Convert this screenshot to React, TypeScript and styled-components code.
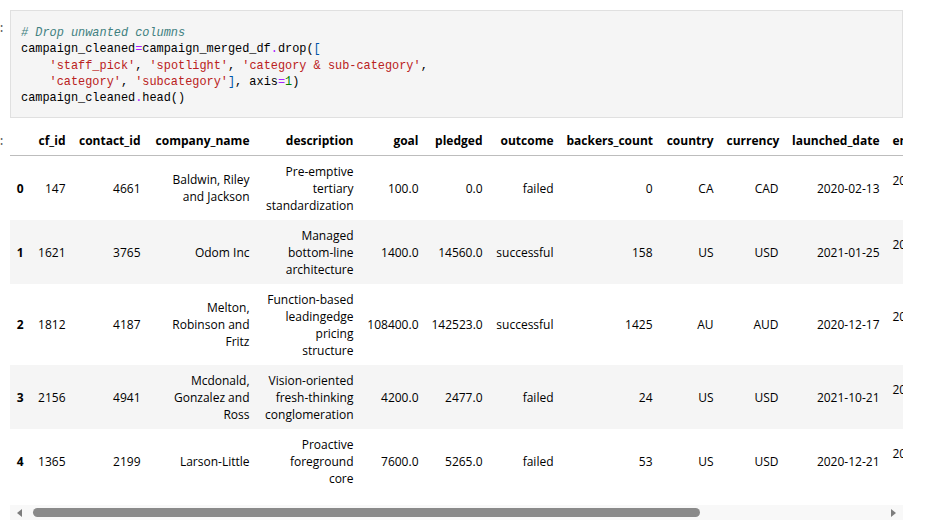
import React from "react";
import styled, { createGlobalStyle } from "styled-components";

const GlobalStyle = createGlobalStyle`
  html, body { margin: 0; padding: 0; background: #ffffff; }
  body { width: 927px; height: 523px; overflow: hidden; }
`;

const Page = styled.div`
  display: flex;
  flex-direction: column;
  gap: 7px;
  padding-top: 10px;
`;

const CellRow = styled.div`
  display: flex;
  align-items: flex-start;
`;

const Prompt = styled.div<{ $top: number }>`
  width: 10px;
  flex: none;
  padding-top: ${(p) => p.$top}px;
  font-family: "Liberation Mono", monospace;
  font-size: 12px;
  line-height: 12px;
  color: #616161;
  text-indent: -2px;
`;

const CodeBox = styled.pre`
  margin: 0;
  width: 893px;
  box-sizing: border-box;
  background: #f5f5f5;
  border: 1px solid #e0e0e0;
  padding: 14px 10px 11px;
  font-family: "Liberation Mono", "DejaVu Sans Mono", monospace;
  font-size: 11.9px;
  line-height: 16.3px;
  color: #000000;
`;

const Comment = styled.span`
  color: #408080;
  font-style: italic;
`;
const Str = styled.span`
  color: #ba2121;
`;
const Op = styled.span`
  color: #aa22ff;
`;
const Num = styled.span`
  color: #008000;
`;
const Br = styled.span`
  color: #0055aa;
`;

const Output = styled.div`
  width: 893px;
  display: flex;
  flex-direction: column;
`;

const Scroller = styled.div`
  width: 893px;
  overflow: hidden;
`;

const Table = styled.table`
  border-collapse: collapse;
  border-spacing: 0;
  table-layout: fixed;
  font-family: "Open Sans", "Noto Sans", sans-serif;
  font-size: 12px;
  line-height: 17px;
  color: #000000;
`;

const HeadCell = styled.th<{ $left?: boolean }>`
  padding: 6.5px;
  text-align: ${(p) => (p.$left ? "left" : "right")};
  vertical-align: middle;
  font-weight: 700;
  white-space: nowrap;
  border-bottom: 1px solid #bdbdbd;
`;

const Row = styled.tr<{ $stripe: boolean }>`
  background: ${(p) => (p.$stripe ? "#f5f5f5" : "#ffffff")};
`;

const IndexCell = styled.th`
  padding: 6.5px;
  text-align: right;
  vertical-align: middle;
  font-weight: 700;
  white-space: nowrap;
`;

const DataCell = styled.td<{ $raise?: boolean }>`
  padding: 6.5px;
  padding-bottom: ${(p) => (p.$raise ? "23px" : "6.5px")};
  text-align: ${(p) => (p.$raise ? "left" : "right")};
  vertical-align: middle;
  white-space: nowrap;
`;

const ScrollTrack = styled.div`
  margin-top: 12px;
  width: 893px;
  height: 15px;
  background: #f8f8f8;
  display: flex;
  align-items: center;
`;

const ScrollArrow = styled.div`
  width: 20px;
  flex: none;
  display: flex;
  justify-content: center;
  align-items: center;
`;

const ThumbLane = styled.div`
  flex: 1;
  padding: 0 3px;
  display: flex;
  align-items: center;
`;

const Thumb = styled.div`
  height: 9px;
  border-radius: 5px;
  background: #8a8a8a;
`;

type Col = { name: string; width: number };

const columns: Col[] = [
  { name: "", width: 20 },
  { name: "cf_id", width: 42 },
  { name: "contact_id", width: 75 },
  { name: "company_name", width: 109 },
  { name: "description", width: 104 },
  { name: "goal", width: 65 },
  { name: "pledged", width: 64 },
  { name: "outcome", width: 71 },
  { name: "backers_count", width: 99 },
  { name: "country", width: 61 },
  { name: "currency", width: 65 },
  { name: "launched_date", width: 101 },
  { name: "end_date", width: 78 },
  { name: "category_id", width: 85 },
  { name: "subcategory_id", width: 95 },
];

type Rec = {
  idx: string;
  cells: string[][];
};

const rows: Rec[] = [
  {
    idx: "0",
    cells: [
      ["147"], ["4661"], ["Baldwin, Riley", "and Jackson"],
      ["Pre-emptive", "tertiary", "standardization"],
      ["100.0"], ["0.0"], ["failed"], ["0"], ["CA"], ["CAD"], ["2020-02-13"],
      ["2021-03-01"], ["cat1"], ["subcat1"],
    ],
  },
  {
    idx: "1",
    cells: [
      ["1621"], ["3765"], ["Odom Inc"],
      ["Managed", "bottom-line", "architecture"],
      ["1400.0"], ["14560.0"], ["successful"], ["158"], ["US"], ["USD"], ["2021-01-25"],
      ["2021-05-25"], ["cat2"], ["subcat2"],
    ],
  },
  {
    idx: "2",
    cells: [
      ["1812"], ["4187"], ["Melton,", "Robinson and", "Fritz"],
      ["Function-based", "leadingedge", "pricing", "structure"],
      ["108400.0"], ["142523.0"], ["successful"], ["1425"], ["AU"], ["AUD"], ["2020-12-17"],
      ["2021-12-30"], ["cat3"], ["subcat3"],
    ],
  },
  {
    idx: "3",
    cells: [
      ["2156"], ["4941"], ["Mcdonald,", "Gonzalez and", "Ross"],
      ["Vision-oriented", "fresh-thinking", "conglomeration"],
      ["4200.0"], ["2477.0"], ["failed"], ["24"], ["US"], ["USD"], ["2021-10-21"],
      ["2022-01-17"], ["cat2"], ["subcat4"],
    ],
  },
  {
    idx: "4",
    cells: [
      ["1365"], ["2199"], ["Larson-Little"],
      ["Proactive", "foreground", "core"],
      ["7600.0"], ["5265.0"], ["failed"], ["53"], ["US"], ["USD"], ["2020-12-21"],
      ["2021-08-23"], ["cat4"], ["subcat4"],
    ],
  },
];

const totalWidth = columns.reduce((s, c) => s + c.width, 0);
const VISIBLE = 893;
const LANE = 893 - 40 - 6;

const Lines: React.FC<{ lines: string[] }> = ({ lines }) => (
  <>
    {lines.map((l, i) => (
      <React.Fragment key={i}>
        {i > 0 && <br />}
        {l}
      </React.Fragment>
    ))}
  </>
);

const Arrow: React.FC<{ dir: "left" | "right" }> = ({ dir }) => (
  <svg width="6" height="8" viewBox="0 0 6 8">
    {dir === "left" ? (
      <polygon points="5,0 5,8 0,4" fill="#7d7d7d" />
    ) : (
      <polygon points="1,0 1,8 6,4" fill="#7d7d7d" />
    )}
  </svg>
);

export default function App() {
  const thumbWidth = Math.round((LANE * VISIBLE) / totalWidth);
  return (
    <>
      <GlobalStyle />
      <Page>
        <CellRow>
          <Prompt $top={13}>:</Prompt>
          <CodeBox>
            <Comment># Drop unwanted columns</Comment>
            {"\n"}campaign_cleaned<Op>=</Op>campaign_merged_df<Op>.</Op>drop(<Br>[</Br>
            {"\n    "}
            <Str>'staff_pick'</Str>, <Str>'spotlight'</Str>, <Str>'category &amp; sub-category'</Str>,
            {"\n    "}
            <Str>'category'</Str>, <Str>'subcategory'</Str>
            <Br>]</Br>, axis<Op>=</Op>
            <Num>1</Num>)
            {"\n"}campaign_cleaned<Op>.</Op>head()
          </CodeBox>
        </CellRow>
        <CellRow>
          <Prompt $top={11}>:</Prompt>
          <Output>
            <Scroller>
              <Table style={{ width: totalWidth }}>
                <colgroup>
                  {columns.map((c, i) => (
                    <col key={i} style={{ width: c.width }} />
                  ))}
                </colgroup>
                <thead>
                  <tr>
                    {columns.map((c, i) => (
                      <HeadCell key={i} $left={i >= 12}>
                        {c.name}
                      </HeadCell>
                    ))}
                  </tr>
                </thead>
                <tbody>
                  {rows.map((r, ri) => (
                    <Row key={r.idx} $stripe={ri % 2 === 1}>
                      <IndexCell>{r.idx}</IndexCell>
                      {r.cells.map((c, ci) => (
                        <DataCell key={ci} $raise={ci >= 11}>
                          <Lines lines={c} />
                        </DataCell>
                      ))}
                    </Row>
                  ))}
                </tbody>
              </Table>
            </Scroller>
            <ScrollTrack>
              <ScrollArrow>
                <Arrow dir="left" />
              </ScrollArrow>
              <ThumbLane>
                <Thumb style={{ width: thumbWidth }} />
              </ThumbLane>
              <ScrollArrow>
                <Arrow dir="right" />
              </ScrollArrow>
            </ScrollTrack>
          </Output>
        </CellRow>
      </Page>
    </>
  );
}
